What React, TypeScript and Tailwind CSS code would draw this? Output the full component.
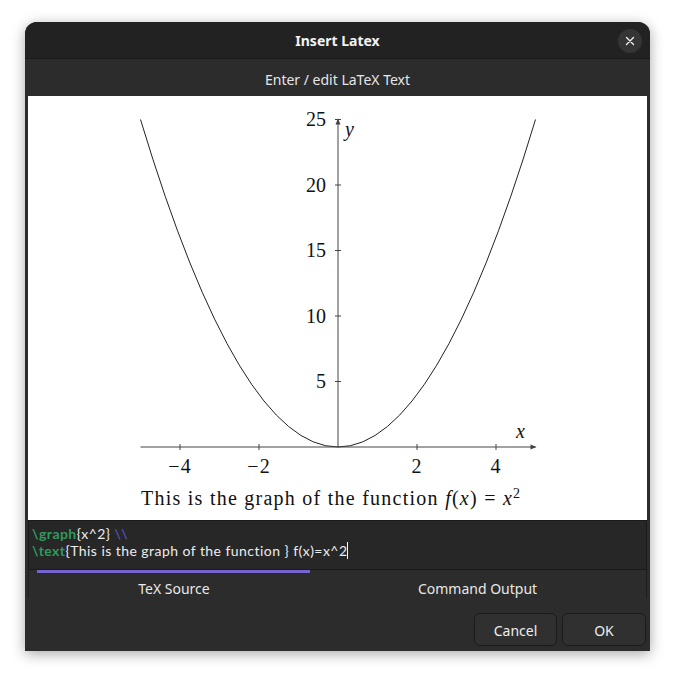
import React from "react";

const ui = { fontFamily: '"Noto Sans", "Open Sans", sans-serif' };
const serif = '"Liberation Serif", serif';

function Plot() {
  const ox = 310;
  const oy = 351;
  const ux = 39.5;
  const uy = 13.1;
  const xt = [-4, -2, 2, 4];
  const yt = [5, 10, 15, 20, 25];
  return (
    <svg width="619" height="390" viewBox="0 0 619 390" className="block">
      <path
        d={`M ${ox - 5 * ux} ${oy - 25 * uy} Q ${ox} ${oy + 25 * uy} ${ox + 5 * ux} ${oy - 25 * uy}`}
        fill="none"
        stroke="#222"
        strokeWidth="1"
      />
      <line x1={ox - 5 * ux} y1={oy} x2={ox + 5 * ux} y2={oy} stroke="#444" strokeWidth="1" />
      <path d={`M ${ox + 5 * ux - 5} ${oy - 2.5} L ${ox + 5 * ux + 1} ${oy} L ${ox + 5 * ux - 5} ${oy + 2.5} Z`} fill="#444" />
      <line x1={ox} y1={oy} x2={ox} y2={oy - 25 * uy} stroke="#444" strokeWidth="1" />
      <path d={`M ${ox - 2.5} ${oy - 25 * uy + 5} L ${ox} ${oy - 25 * uy - 1} L ${ox + 2.5} ${oy - 25 * uy + 5} Z`} fill="#444" />
      {xt.map((v) => (
        <g key={v}>
          <line x1={ox + v * ux} y1={oy - 3} x2={ox + v * ux} y2={oy + 3} stroke="#444" />
          <text
            x={ox + v * ux}
            y={oy + 26}
            textAnchor="middle"
            fontFamily={serif}
            fontSize="20"
            letterSpacing="1"
            fill="#111"
          >
            {v < 0 ? `\u2212${-v}` : v}
          </text>
        </g>
      ))}
      {yt.map((v) => (
        <g key={v}>
          <line x1={ox - 3} y1={oy - v * uy} x2={ox + 3} y2={oy - v * uy} stroke="#444" />
          <text
            x={ox - 12}
            y={oy - v * uy + 6.5}
            textAnchor="end"
            fontFamily={serif}
            fontSize="20"
            fill="#111"
          >
            {v}
          </text>
        </g>
      ))}
      <text x={ox + 7} y={oy - 25 * uy + 16} fontFamily={serif} fontStyle="italic" fontSize="20" fill="#111">
        y
      </text>
      <text x={ox + 178} y={oy - 9} fontFamily={serif} fontStyle="italic" fontSize="20" fill="#111">
        x
      </text>
    </svg>
  );
}

export default function App() {
  return (
    <div className="w-[675px] h-[679px] bg-white pt-[22px] pl-[25px]" style={ui}>
      <div className="w-[625px] h-[629px] flex flex-col rounded-t-[12px] bg-[#2c2c2c] shadow-[0_3px_14px_rgba(0,0,0,0.35)] overflow-hidden">
        <div className="relative h-[37px] shrink-0 flex items-center justify-center bg-[#222222] border-b border-[#1a1a1a]">
          <span className="text-[14px] font-bold text-[#f2f2f2]">Insert Latex</span>
          <div className="absolute right-[8px] top-[7px] w-[24px] h-[24px] rounded-full bg-[#353535] flex items-center justify-center">
            <svg width="10" height="10" viewBox="0 0 10 10">
              <path d="M1.5 1.5 L8.5 8.5 M8.5 1.5 L1.5 8.5" stroke="#f0f0f0" strokeWidth="1.4" strokeLinecap="round" />
            </svg>
          </div>
        </div>
        <div className="h-[37px] shrink-0 flex items-center justify-center pt-[3px]">
          <span className="text-[14px] text-[#e6e6e6]">Enter / edit LaTeX Text</span>
        </div>
        <div className="px-[3px]">
          <div className="h-[424px] bg-white flex flex-col">
            <Plot />
            <div
              className="pl-[113px] text-[20px] leading-[24px] tracking-[1.25px] text-[#111] whitespace-nowrap"
              style={{ fontFamily: serif }}
            >
              This is the graph of the function <i>f</i>(<i>x</i>) = <i>x</i>
              <sup className="text-[14px]">2</sup>
            </div>
          </div>
          <div
            className="h-[50px] bg-[#272727] border border-[#1a1a1a] px-[3px] pt-[4px] text-[14px] tracking-[0.45px] text-[#ececec] whitespace-pre flex flex-col"
            style={{ fontFamily: 'Lato, "Noto Sans", sans-serif' }}
          >
            <div className="flex h-[17px] leading-[17px]">
              <span className="block text-[#2f9a5c] font-bold">\graph</span>
              <span className="block">{"{x^2} "}</span>
              <span className="block text-[#5b5bd9]">\\</span>
            </div>
            <div className="flex h-[17px] leading-[17px] items-center">
              <span className="block text-[#2f9a5c] font-bold">\text</span>
              <span className="block">{"{This is the graph of the function } f(x)=x^2"}</span>
              <span className="block w-[1px] h-[17px] bg-white" />
            </div>
          </div>
          <div className="h-[28px] flex border-l border-r border-[#1e1e1e]">
            <div className="w-[290px] flex flex-col items-center">
              <div className="w-[273px] h-[3px] bg-[#7762d0] ml-[-1px]" />
              <span className="mt-[8px] text-[14px] leading-[16px] text-[#e8e8e8]">TeX Source</span>
            </div>
            <div className="flex-1 flex flex-col items-center pt-[11px] pr-[10px]">
              <span className="text-[14px] leading-[16px] text-[#e8e8e8]">Command Output</span>
            </div>
          </div>
        </div>
        <div className="flex justify-end gap-[5px] pt-[15px] pr-[4px]">
          <button className="w-[83px] h-[33px] rounded-[6px] bg-[#303030] border border-[#1b1b1b] text-[14px] text-[#eeeeee] pt-[2px]">
            Cancel
          </button>
          <button className="w-[84px] h-[33px] rounded-[6px] bg-[#303030] border border-[#1b1b1b] text-[14px] text-[#eeeeee] pt-[2px]">
            OK
          </button>
        </div>
      </div>
    </div>
  );
}
